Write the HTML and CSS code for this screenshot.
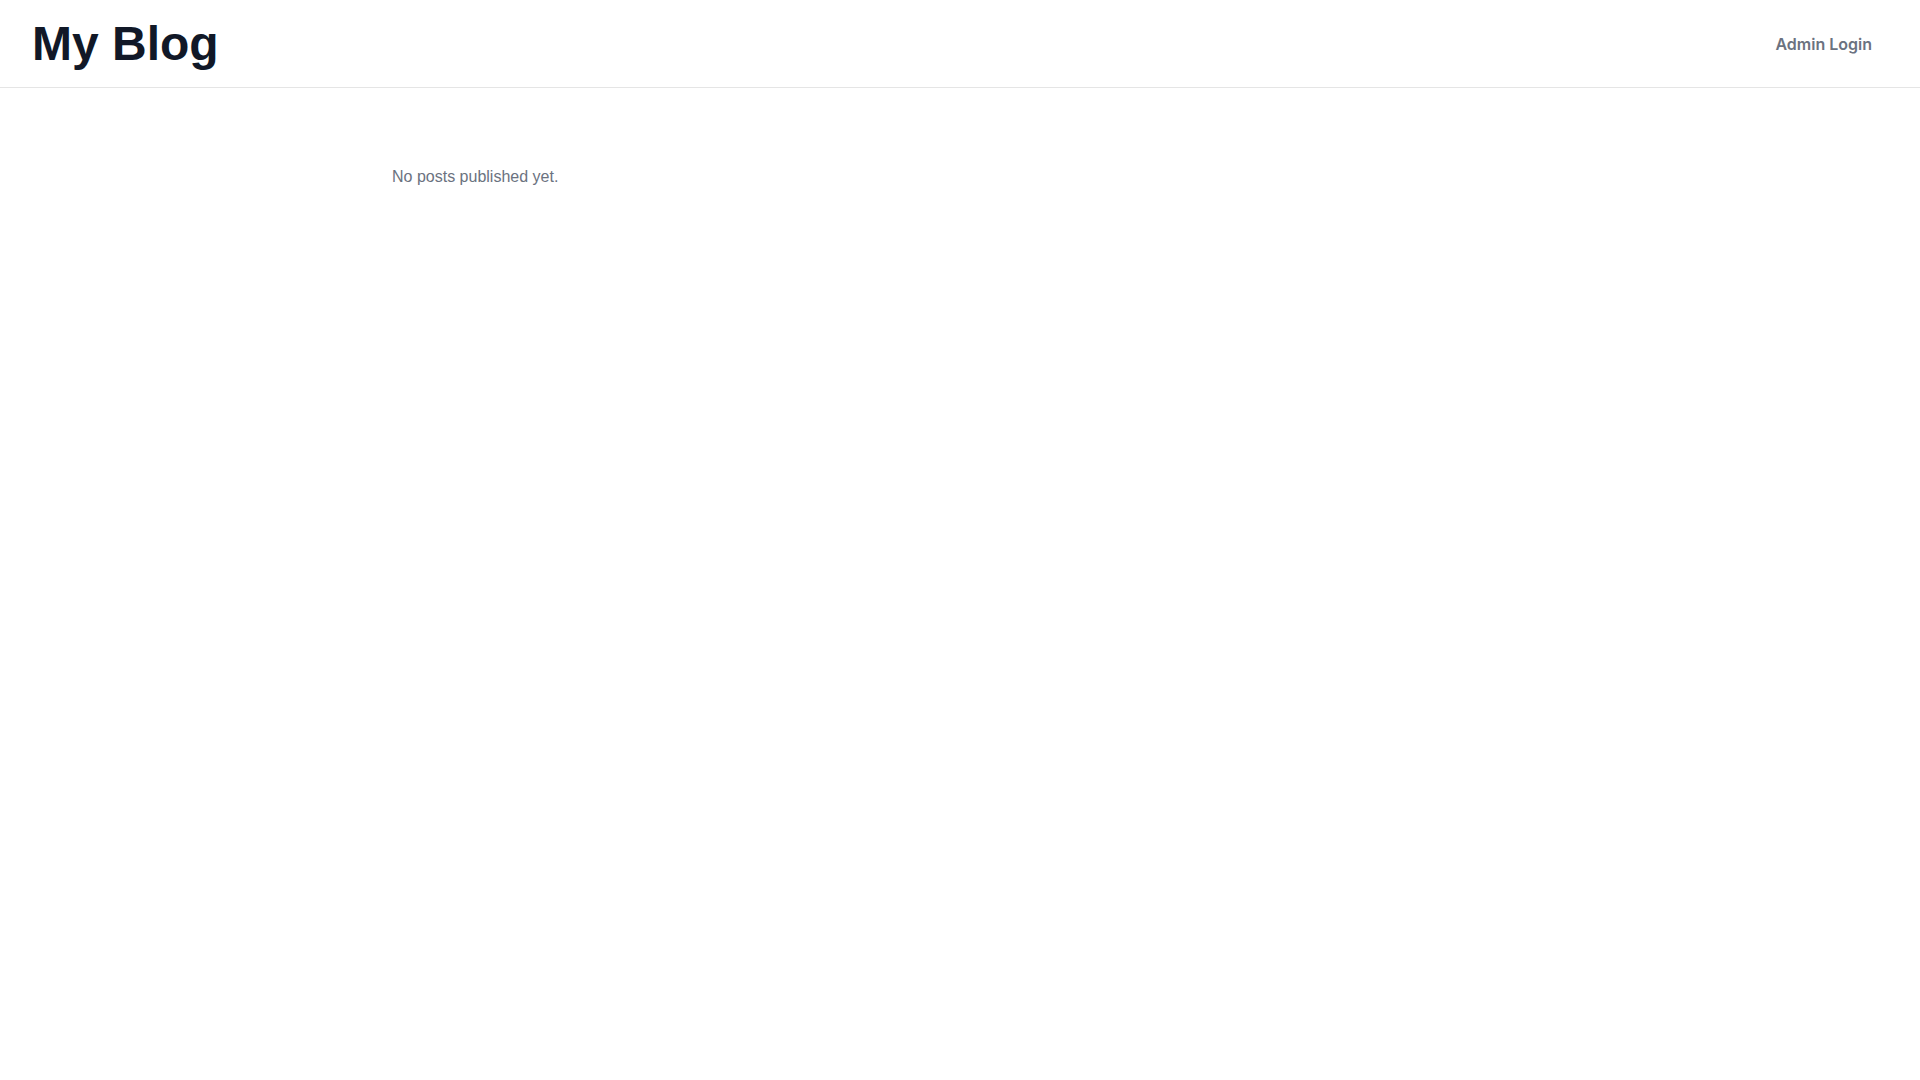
FILE: index.html
```html
<!DOCTYPE html>
<html lang="en">
<head>
  <meta charset="UTF-8">
  <meta name="viewport" content="width=device-width, initial-scale=1.0">
  <title>My Blog</title>
  <link rel="stylesheet" href="styles.css">
</head>
<body>
  <header class="site-header">
    <h1 class="site-title">My Blog</h1>
    <nav>
      <a class="nav-link" href="/login">Admin Login</a>
    </nav>
  </header>

  <main class="container">
    <p class="empty">No posts published yet.</p>
  </main>
</body>
</html>
```

FILE: styles.css
```css
* {
  box-sizing: border-box;
}

body {
  margin: 0;
  font-family: "Liberation Sans", Arial, sans-serif;
  font-size: 16px;
  line-height: 18px;
  background-color: #fff;
  color: #111827;
}

.site-header {
  display: flex;
  justify-content: space-between;
  align-items: center;
  padding: 16px 32px;
  border-bottom: 1px solid #e5e5e5;
}

.site-title {
  margin: 0;
  font-size: 48px;
  line-height: 55px;
  font-weight: 700;
}

.nav-link {
  display: block;
  padding: 8px 16px;
  font-family: Inter, sans-serif;
  font-weight: 600;
  color: #6b7280;
  text-decoration: none;
}

.nav-link:hover {
  color: #111827;
}

.container {
  max-width: 1200px;
  margin: 0 auto;
  padding: 64px 32px;
}

.empty {
  margin: 16px 0;
  color: #6b7280;
}
```
